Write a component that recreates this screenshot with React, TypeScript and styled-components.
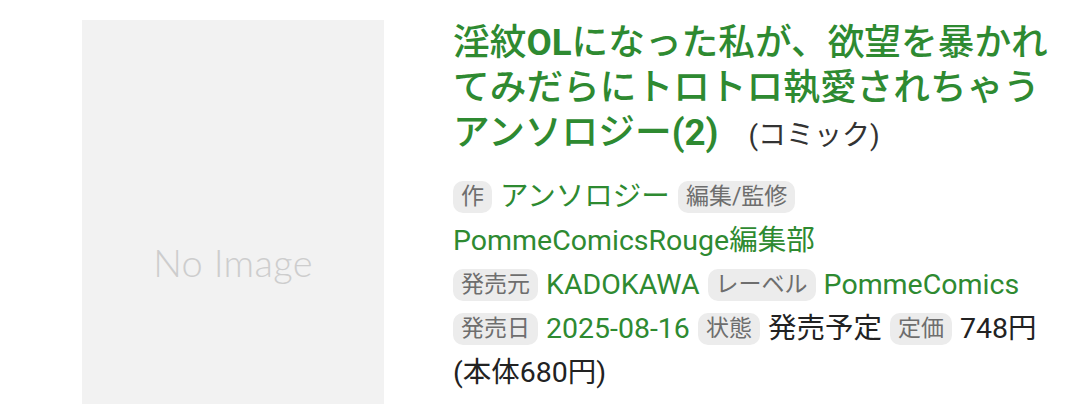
import styled, { createGlobalStyle } from 'styled-components';

const GlobalStyle = createGlobalStyle`
  html, body {
    margin: 0;
    padding: 0;
    background: #ffffff;
    overflow: hidden;
  }
  body {
    font-family: Roboto, "Noto Sans CJK JP", sans-serif;
  }
`;

interface MetaItem {
  label?: string;
  value: string;
  plain?: boolean;
}

// creators / publisher / release each start on their own line
const metaGroups: MetaItem[][] = [
  [
    { label: '作', value: 'アンソロジー' },
    { label: '編集/監修', value: 'PommeComicsRouge編集部' },
  ],
  [
    { label: '発売元', value: 'KADOKAWA' },
    { label: 'レーベル', value: 'PommeComics' },
  ],
  [
    { label: '発売日', value: '2025-08-16' },
    { label: '状態', value: '発売予定', plain: true },
    { label: '定価', value: '748円', plain: true },
    { value: '(本体680円)', plain: true },
  ],
];

export default function App() {
  const meta = metaGroups.map((group, groupIndex) => (
    <MetaGroup key={groupIndex}>
      {group.map((item, index) => (
        <span key={index}>
          {item.label && <Label>{item.label}</Label>}
          <Value $plain={item.plain}>{item.value}</Value>
        </span>
      ))}
    </MetaGroup>
  ));

  return (
    <>
      <GlobalStyle />
      <BookDetail>
        <CoverPlaceholder>
          <NoImageText>No Image</NoImageText>
        </CoverPlaceholder>
        <InfoColumn>
          <Title>
            淫紋<Latin>OL</Latin>になった私が、欲望を暴かれてみだらにトロトロ執愛されちゃうアンソロジー
            <Latin>(2)</Latin>
            <Format>(コミック)</Format>
          </Title>
          <MetaList>{meta}</MetaList>
        </InfoColumn>
      </BookDetail>
    </>
  );
}

const BookDetail = styled.div`
  display: flex;
  align-items: flex-start;
  gap: 69px;
  padding: 20px 20px 0 82px;
  width: 1080px;
  box-sizing: border-box;
`;

const CoverPlaceholder = styled.div`
  flex: 0 0 302px;
  height: 484px;
  background-color: #f2f2f2;
  display: flex;
  align-items: center;
  justify-content: center;
`;

const NoImageText = styled.span`
  font-family: Lato, "Open Sans", sans-serif;
  font-weight: 300;
  font-size: 38px;
  color: #cdcdcd;
  letter-spacing: 0.3px;
`;

const InfoColumn = styled.div`
  flex: 1;
  min-width: 0;
`;

const Title = styled.h1`
  margin: 0;
  font-size: 36.7px;
  line-height: 45px;
  font-weight: 500;
  color: #2e8a31;
`;

const Latin = styled.span`
  font-weight: 700;
`;

const Format = styled.span`
  margin-left: 30px;
  font-size: 28px;
  font-weight: 400;
  color: #333333;
`;

const MetaList = styled.div`
  margin-top: 17px;
  font-size: 28.5px;
  line-height: 44px;
`;

const MetaGroup = styled.div``;

const Label = styled.span`
  display: inline-block;
  vertical-align: top;
  margin: 6px 8px 0 0;
  padding: 0 8px;
  font-size: 23px;
  line-height: 32px;
  font-weight: 400;
  color: #6e6e6e;
  background-color: #ececec;
  border-radius: 10px;
`;

const Value = styled.span<{ $plain?: boolean }>`
  display: inline-block;
  vertical-align: top;
  margin-right: 8px;
  white-space: nowrap;
  color: ${({ $plain }) => ($plain ? '#222222' : '#2e8a31')};
`;
